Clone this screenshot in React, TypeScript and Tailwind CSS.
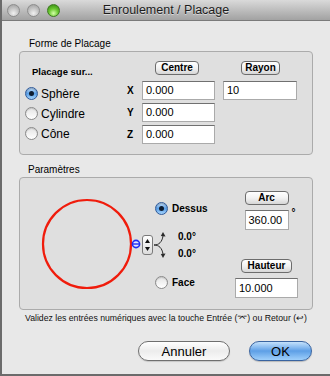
import React from 'react';

function Radio({ checked = false }: { checked?: boolean }) {
  if (checked) {
    return (
      <span className="flex h-[13px] w-[13px] shrink-0 items-center justify-center rounded-full border border-[#2f5a9a] bg-gradient-to-b from-[#c6e2fc] via-[#5aa0e8] to-[#a4d3fb] shadow-[inset_0_1px_1px_rgba(0,0,0,0.25)]">
        <span className="h-[5px] w-[5px] rounded-full bg-[#0e1c30]" />
      </span>
    );
  }
  return (
    <span className="h-[13px] w-[13px] shrink-0 rounded-full border border-[#8a8a8a] bg-gradient-to-b from-[#e4e4e4] to-white shadow-[inset_0_1px_1px_rgba(0,0,0,0.15)]" />
  );
}

function PushButton({ label, className }: { label: string; className: string }) {
  return (
    <div
      className={`flex h-[14px] shrink-0 items-center justify-center rounded-[4px] border border-[#6c6c6c] bg-gradient-to-b from-white via-[#f2f2f2] to-[#d6d6d6] text-[10px] font-bold leading-none text-black ${className}`}
    >
      {label}
    </div>
  );
}

function Field({ value, className }: { value: string; className: string }) {
  return (
    <div
      className={`flex shrink-0 items-center border border-[#aaaaaa] border-t-[#707070] bg-white pl-[3px] text-[11px] leading-none text-black ${className}`}
    >
      {value}
    </div>
  );
}

function Light({ green = false }: { green?: boolean }) {
  return green ? (
    <span className="h-[13px] w-[13px] rounded-full border border-[#3d7a20] bg-[radial-gradient(circle_at_50%_75%,#d4ffa8,#6cc932_45%,#3a8f14_90%)]" />
  ) : (
    <span className="h-[13px] w-[13px] rounded-full border border-[#8d8d8d] bg-[radial-gradient(circle_at_50%_75%,#f0f0f0,#c4c4c4_50%,#a3a3a3_90%)]" />
  );
}

export default function App() {
  const shapes = ['Sphère', 'Cylindre', 'Cône'];
  const axes = [
    { axis: 'X', value: '0.000' },
    { axis: 'Y', value: '0.000' },
    { axis: 'Z', value: '0.000' },
  ];

  return (
    <div className="flex h-[376px] w-[330px] flex-col overflow-hidden border-b-2 border-l-2 border-[#6b6b6b] bg-[#e8e8e8] font-['Liberation_Sans',Arial,sans-serif] text-black">
      {/* title bar */}
      <div className="relative flex h-[21px] shrink-0 items-center border-b border-[#7a7a7a] bg-gradient-to-b from-[#dadada] to-[#a2a2a2]">
        <div className="flex items-center gap-[7px] pl-[5px]">
          <Light />
          <Light />
          <Light green />
        </div>
        <div className="absolute inset-0 flex items-center justify-center text-[12.5px] leading-none text-[#1c1c1c] [text-shadow:0_1px_0_rgba(255,255,255,0.5)]">
          Enroulement / Placage
        </div>
      </div>

      <div className="pl-[17px]">
        {/* Forme de Placage */}
        <div className="mt-[16px] pl-[10px] text-[10px] leading-[14px]">Forme de Placage</div>
        <div className="h-[104px] w-[294px] rounded-[4px] border border-[#ababab] bg-[#dfdfdf] pt-[9px]">
          <div className="flex items-start">
            <div className="w-[135px] pl-[12px] pt-[5px] text-[9.5px] font-bold leading-[11px]">Placage sur...</div>
            <PushButton label="Centre" className="w-[44px]" />
            <PushButton label="Rayon" className="ml-[42px] w-[39px]" />
          </div>
          <div className="mt-[4px] flex">
            <div className="flex w-[107px] flex-col gap-[7px] pl-[5px] pt-[6px]">
              {shapes.map((s, i) => (
                <div key={s} className="flex h-[13px] items-center gap-[3px] text-[12px] leading-none">
                  <Radio checked={i === 0} />
                  <span>{s}</span>
                </div>
              ))}
            </div>
            <div className="flex flex-col gap-[3px]">
              {axes.map((a, i) => (
                <div key={a.axis} className="flex h-[19px] items-center">
                  <span className="w-[15px] text-[10px] font-bold leading-none">{a.axis}</span>
                  <Field value={a.value} className="h-[19px] w-[73px]" />
                  {i === 0 && <Field value="10" className="ml-[8px] h-[19px] w-[74px]" />}
                </div>
              ))}
            </div>
          </div>
        </div>

        {/* Paramètres */}
        <div className="mt-[8px] pl-[9px] text-[10px] leading-[14px]">Paramètres</div>
        <div className="flex h-[133px] w-[294px] rounded-[4px] border border-[#ababab] bg-[#dfdfdf]">
          <div className="flex w-[133px] items-center pl-[21px]">
            <svg width="100" height="94" viewBox="0 0 100 94" className="shrink-0">
              <circle cx="46" cy="47" r="44" fill="none" stroke="#f01c0c" strokeWidth="2.2" />
              <circle cx="95" cy="47" r="3.6" fill="#e4e6ff" stroke="#1f2cf2" strokeWidth="1.6" />
              <line x1="91.5" y1="47" x2="98.5" y2="47" stroke="#1f2cf2" strokeWidth="1.4" />
            </svg>
            <div className="ml-[1px] mt-[3px] flex h-[20px] w-[11px] shrink-0 flex-col items-center justify-center gap-[4px] rounded-[3px] border border-[#7a7a7a] bg-gradient-to-b from-white to-[#dcdcdc]">
              <svg width="5" height="4" viewBox="0 0 5 4">
                <polygon points="2.5,0 5,4 0,4" fill="#111" />
              </svg>
              <svg width="5" height="4" viewBox="0 0 5 4">
                <polygon points="0,0 5,0 2.5,4" fill="#111" />
              </svg>
            </div>
          </div>

          <div className="flex w-[82px] flex-col pt-[24px]">
            <div className="flex h-[13px] items-center gap-[4px] pl-[2px] text-[10px] font-bold leading-none">
              <Radio checked />
              <span>Dessus</span>
            </div>
            <div className="mt-[15px] flex h-[30px]">
              <svg width="14" height="30" viewBox="0 0 14 30" className="shrink-0">
                <path d="M1 15 C6 15 9 12 10 6" fill="none" stroke="#2a2a2a" strokeWidth="1" />
                <path d="M1 15 C6 15 9 18 10 24" fill="none" stroke="#2a2a2a" strokeWidth="1" />
                <polygon points="10,2 12.5,6.5 7.8,6" fill="#2a2a2a" />
                <polygon points="10,28 12.5,23.5 7.8,24" fill="#2a2a2a" />
              </svg>
              <div className="-mt-[2px] ml-[11px] flex flex-col text-[10px] font-bold leading-[17px]">
                <span>0.0°</span>
                <span>0.0°</span>
              </div>
            </div>
            <div className="mt-[16px] flex h-[13px] items-center gap-[4px] pl-[2px] text-[10px] font-bold leading-none">
              <Radio />
              <span>Face</span>
            </div>
          </div>

          <div className="flex w-[63px] flex-col items-center pt-[13px]">
            <PushButton label="Arc" className="w-[44px]" />
            <div className="relative mt-[5px]">
              <Field value="360.00" className="h-[20px] w-[44px]" />
              <span className="absolute -right-[7px] -top-[2px] text-[10px] font-bold leading-none">°</span>
            </div>
            <PushButton label="Hauteur" className="mt-[29px] w-[51px]" />
            <Field value="10.000" className="mt-[5px] h-[20px] w-[63px]" />
          </div>
        </div>
      </div>

      <div className="mt-[2px] text-center text-[8.7px] leading-[12px] text-[#111]">
        Validez les entrées numériques avec la touche Entrée (⌤) ou Retour (↩)
      </div>

      <div className="mt-[17px] flex justify-end gap-[19px] pr-[18px]">
        <div className="flex h-[20px] w-[92px] items-center justify-center rounded-full border border-[#6f6f6f] bg-gradient-to-b from-white via-[#ececec] to-[#fafafa] text-[13px] leading-none shadow-[0_1px_1px_rgba(0,0,0,0.15)]">
          Annuler
        </div>
        <div className="flex h-[20px] w-[63px] items-center justify-center rounded-full border border-[#3a64a0] bg-gradient-to-b from-[#c4e1fb] via-[#5d9fe6] to-[#9fd0fb] text-[13px] leading-none shadow-[0_1px_1px_rgba(0,0,0,0.2)]">
          OK
        </div>
      </div>
    </div>
  );
}
